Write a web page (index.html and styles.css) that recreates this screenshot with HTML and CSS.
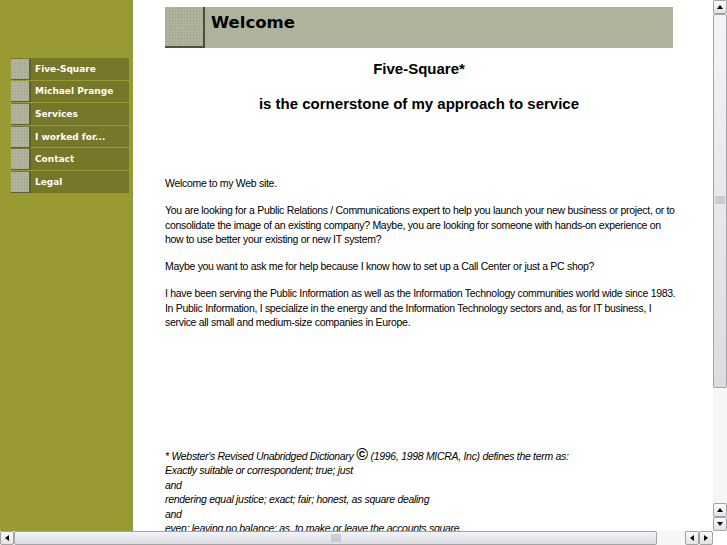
FILE: index.html
```html
<!DOCTYPE html>
<html>
<head>
<meta charset="utf-8">
<title>Welcome</title>
<link rel="stylesheet" href="styles.css">
</head>
<body>
<div class="frame">
  <div class="viewport">
    <nav class="sidebar">
      <a class="nav-item" href="#"><span class="sq"></span><span class="nav-label">Five-Square</span></a>
      <a class="nav-item" href="#"><span class="sq"></span><span class="nav-label">Michael Prange</span></a>
      <a class="nav-item" href="#"><span class="sq"></span><span class="nav-label">Services</span></a>
      <a class="nav-item" href="#"><span class="sq"></span><span class="nav-label">I worked for...</span></a>
      <a class="nav-item" href="#"><span class="sq"></span><span class="nav-label">Contact</span></a>
      <a class="nav-item" href="#"><span class="sq"></span><span class="nav-label">Legal</span></a>
    </nav>
    <main class="content">
      <div class="title-bar"><span class="title-sq"></span><h1 class="title">Welcome</h1></div>
      <h2 class="head1">Five-Square*</h2>
      <h2 class="head2">is the cornerstone of my approach to service</h2>
      <div class="body-text">
        <p>Welcome to my Web site.</p>
        <p>You are looking for a Public Relations / Communications expert to help you launch your new business or project, or to consolidate the image of an existing company? Maybe, you are looking for someone with hands-on experience on how to use better your existing or new IT system?</p>
        <p>Maybe you want to ask me for help because I know how to set up a Call Center or just a PC shop?</p>
        <p>I have been serving the Public Information as well as the Information Technology communities world wide since 1983. In Public Information, I specialize in the energy and the Information Technology sectors and, as for IT business, I service all small and medium-size companies in Europe.</p>
      </div>
      <div class="footnote">
        * Webster's Revised Unabridged Dictionary <span class="copy">©</span> (1996, 1998 MICRA, Inc) defines the term as:<br>
        Exactly suitable or correspondent; true; just<br>
        and<br>
        rendering equal justice; exact; fair; honest, as square dealing<br>
        and<br>
        even; leaving no balance; as, to make or leave the accounts square
      </div>
    </main>
  </div>
  <div class="vscroll">
    <span class="sb-btn"><span class="arr up"></span></span>
    <span class="sb-thumb-v"><span class="grip"></span></span>
    <span class="sb-track"></span>
    <span class="sb-btn"><span class="arr up"></span></span>
    <span class="sb-btn"><span class="arr down"></span></span>
  </div>
  <div class="hscroll">
    <span class="sb-btn h"><span class="arr left"></span></span>
    <span class="sb-thumb-h"><span class="grip"></span></span>
    <span class="sb-track h"></span>
    <span class="sb-btn h"><span class="arr left"></span></span>
    <span class="sb-btn h"><span class="arr right"></span></span>
  </div>
  <div class="corner"></div>
</div>
</body>
</html>
```
FILE: styles.css
```css
html, body {
  margin: 0;
  padding: 0;
  overflow: hidden;
  background: #ffffff;
}
.frame {
  display: grid;
  grid-template-columns: 713px 14px;
  grid-template-rows: 531px 14px;
  width: 727px;
  height: 545px;
}
.viewport {
  display: flex;
  overflow: hidden;
  background: #ffffff;
}
.sidebar {
  width: 133px;
  flex: none;
  background: #9a9a33;
  padding: 58px 0 0 11px;
  box-sizing: border-box;
  display: flex;
  flex-direction: column;
  gap: 1px;
}
.nav-item {
  display: flex;
  align-items: center;
  width: 118px;
  height: 21.6px;
  background: #77772a;
  text-decoration: none;
}
.sq {
  width: 18px;
  height: 20px;
  flex: none;
  background-color: #b0b49b;
  background-image: radial-gradient(circle, #9a9e86 0.7px, transparent 0.8px);
  background-size: 3px 3px;
  border-right: 2px solid #5e5e3c;
  border-bottom: 1px solid #5e5e3c;
  margin-top: 1px;
}
.nav-label {
  font-family: "DejaVu Sans", Verdana, sans-serif;
  font-weight: bold;
  font-size: 9px;
  color: #ffffff;
  margin-left: 4px;
}
.content {
  margin-left: 32px;
  width: 512px;
  flex: none;
  font-family: "Liberation Sans", Arial, sans-serif;
  color: #000;
}
.title-bar {
  margin-top: 7px;
  width: 508px;
  height: 41px;
  background: #afb39b;
  display: flex;
  align-items: flex-start;
}
.title-sq {
  width: 38px;
  height: 39px;
  flex: none;
  background-color: #afb39b;
  background-image: radial-gradient(circle, #979b82 0.7px, transparent 0.8px);
  background-size: 3px 3px;
  border-right: 2px solid #4f5037;
  border-bottom: 2px solid #4f5037;
}
.title {
  margin: 4px 0 0 6px;
  font-family: "DejaVu Sans", Verdana, sans-serif;
  font-size: 16.5px;
  font-weight: bold;
  line-height: 24px;
}
.head1, .head2 {
  width: 508px;
  text-align: center;
  font-size: 15px;
  font-weight: bold;
  margin: 0;
  line-height: 18px;
}
.head1 { margin-top: 12px; }
.head2 { margin-top: 17px; }
.body-text {
  margin-top: 63px;
  font-size: 10.5px;
  letter-spacing: -0.3px;
  line-height: 14.5px;
}
.body-text p {
  margin: 0 0 12.5px 0;
}
.footnote {
  margin-top: 119px;
  width: 540px;
  font-size: 10.5px;
  letter-spacing: -0.3px;
  line-height: 14.6px;
  font-style: italic;
}
.copy {
  font-style: normal;
  font-size: 16px;
  font-weight: bold;
  line-height: 10px;
  letter-spacing: 0;
}
/* scrollbars */
.vscroll {
  display: flex;
  flex-direction: column;
  background: #f2f2f2;
}
.hscroll {
  display: flex;
  background: #f2f2f2;
}
.corner { background: #ffffff; }
.sb-btn {
  flex: none;
  width: 14px;
  height: 14px;
  box-sizing: border-box;
  border: 1px solid #a3a3a3;
  border-radius: 2px;
  background: linear-gradient(#fbfbfd, #e2e3e8);
  display: flex;
  align-items: center;
  justify-content: center;
}
.sb-btn.h { height: 14px; }
.sb-thumb-v {
  flex: none;
  height: 374px;
  box-sizing: border-box;
  border: 1px solid #a3a3a3;
  border-radius: 2px;
  background: linear-gradient(#f3f4f9, #dcdde2);
  display: flex;
  align-items: center;
  justify-content: center;
  padding-bottom: 2px;
}
.sb-thumb-h {
  flex: none;
  width: 643px;
  box-sizing: border-box;
  border: 1px solid #a3a3a3;
  border-radius: 2px;
  background: linear-gradient(#f3f4f9, #dcdde2);
  display: flex;
  align-items: center;
  justify-content: center;
}
.grip {
  width: 10px;
  height: 8px;
  background-image: radial-gradient(circle, #a8a8ac 0.6px, transparent 0.8px);
  background-size: 2px 2px;
}
.sb-track {
  flex: 1;
  background-color: #f6f6f6;
  background-image: radial-gradient(circle, #e6e6e6 0.5px, transparent 0.7px);
  background-size: 2px 2px;
}
.arr {
  width: 0;
  height: 0;
  border: 3px solid transparent;
}
.arr.up { border-bottom: 4px solid #000; border-top-width: 0; }
.arr.down { border-top: 4px solid #000; border-bottom-width: 0; }
.arr.left { border-right: 4px solid #000; border-left-width: 0; }
.arr.right { border-left: 4px solid #000; border-right-width: 0; }
```
